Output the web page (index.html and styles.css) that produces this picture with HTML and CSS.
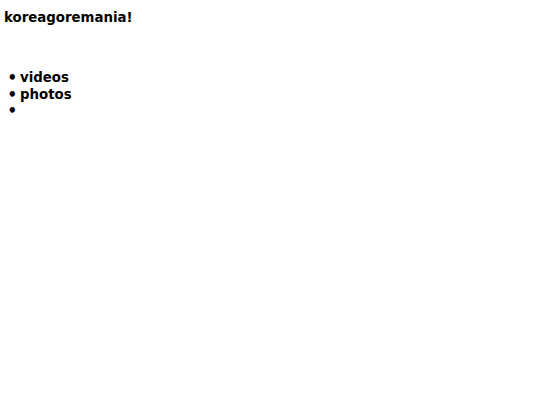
FILE: index.html
```html
<!DOCTYPE html>
<html>
<head>
<meta charset="utf-8">
<link rel="stylesheet" href="styles.css">
</head>
<body>
<div class="title">koreagoremania!</div>
<ul class="menu">
<li>videos</li>
<li>photos</li>
<li></li>
</ul>
</body>
</html>
```
FILE: styles.css
```css
body {
  margin: 4px;
  font-family: "DejaVu Sans", Verdana, sans-serif;
  font-weight: bold;
  font-size: 13.33px;
  color: #000;
  background: #fff;
}
.title {
  margin-top: 6px;
  line-height: 16px;
}
.menu {
  margin: 44px 0 0 0;
  padding-left: 16px;
  line-height: 16.5px;
  list-style: none;
}
.menu li {
  min-height: 16.5px;
}
.menu li::before {
  content: "\2022";
  display: inline-block;
  width: 16px;
  margin-left: -16px;
  padding-right: 3px;
  box-sizing: border-box;
  text-align: right;
  font-size: 15px;
  line-height: 16.5px;
  vertical-align: top;
}
```
